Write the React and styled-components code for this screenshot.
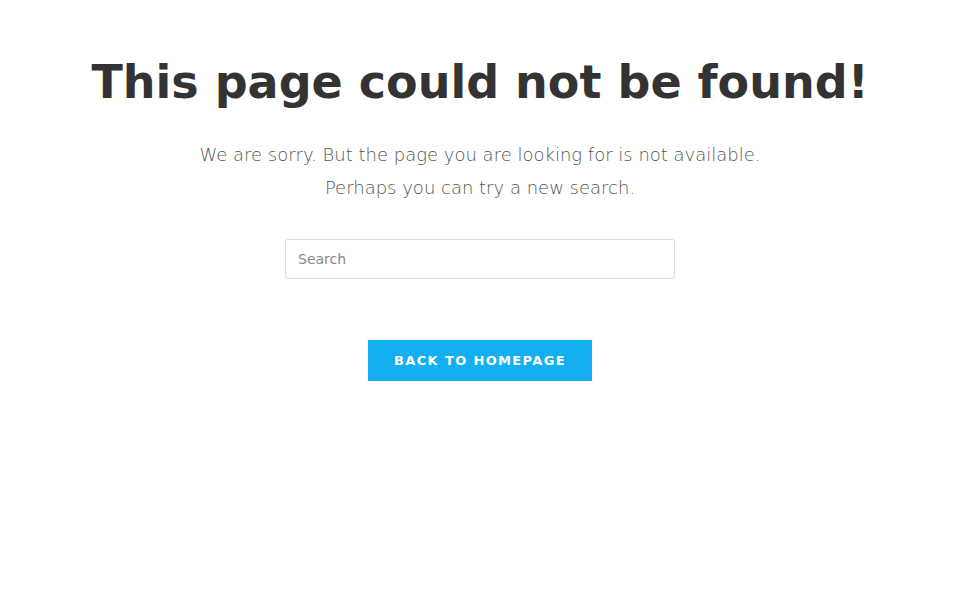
import React from "react";
import styled, { createGlobalStyle } from "styled-components";

const GlobalStyle = createGlobalStyle`
  html, body {
    margin: 0;
    padding: 0;
    background: #fff;
    font-family: "DejaVu Sans", sans-serif;
  }
`;

const Page = styled.main`
  display: flex;
  flex-direction: column;
  align-items: center;
  padding-top: 54px;
  text-align: center;
`;

const Title = styled.h1`
  margin: 0;
  font-size: 46px;
  line-height: 56px;
  font-weight: 700;
  color: #333;
`;

const Lead = styled.p`
  margin: 28px 0 0;
  font-size: 18px;
  line-height: 33px;
  font-weight: 200;
  color: #555;
`;

const SearchForm = styled.form`
  margin-top: 35px;
  width: 390px;
`;

const SearchInput = styled.input`
  box-sizing: border-box;
  width: 100%;
  height: 40px;
  padding: 0 12px;
  border: 1px solid #ddd;
  border-radius: 3px;
  font-family: "DejaVu Sans", sans-serif;
  font-size: 14px;
  color: #333;
  outline: none;

  &::placeholder {
    color: #888;
  }
`;

const HomeButton = styled.a`
  display: inline-flex;
  align-items: center;
  justify-content: center;
  margin-top: 61px;
  width: 224px;
  height: 41px;
  background: #13aff0;
  color: #fff;
  font-size: 13px;
  font-weight: 700;
  letter-spacing: 1.35px;
  text-transform: uppercase;
  text-decoration: none;
`;

export default function App() {
  return (
    <>
      <GlobalStyle />
      <Page>
        <Title>This page could not be found!</Title>
        <Lead>
          We are sorry. But the page you are looking for is not available.
          <br />
          Perhaps you can try a new search.
        </Lead>
        <SearchForm onSubmit={(e) => e.preventDefault()}>
          <SearchInput type="search" placeholder="Search" />
        </SearchForm>
        <HomeButton href="#">Back to homepage</HomeButton>
      </Page>
    </>
  );
}
